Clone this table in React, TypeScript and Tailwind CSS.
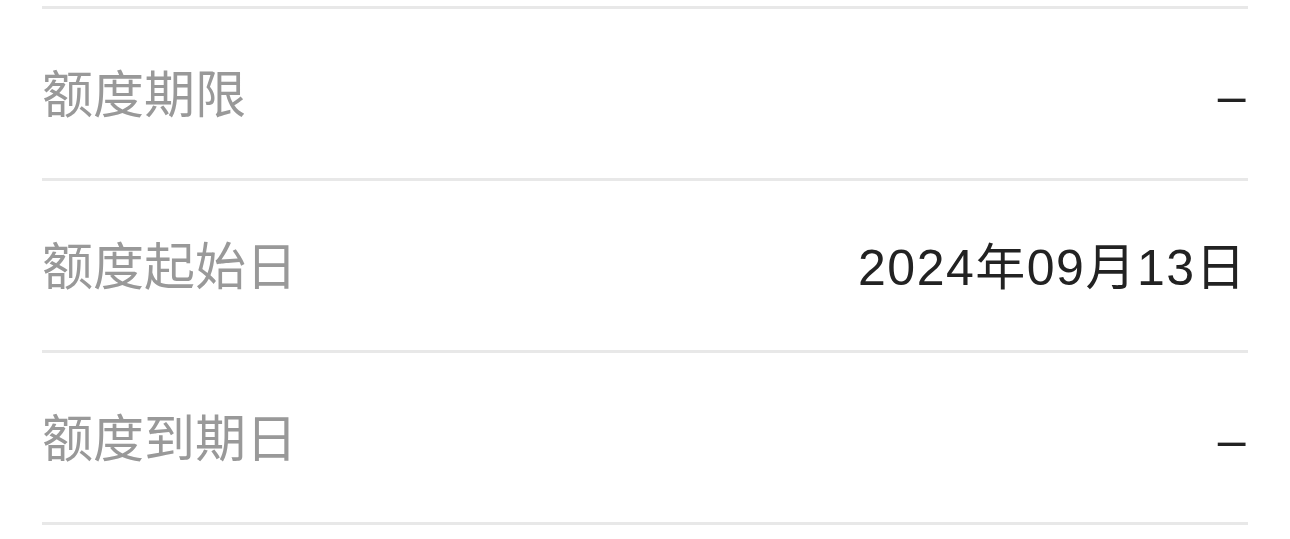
import React from 'react';

const rows = [
  { label: '额度期限', value: '–' },
  { label: '额度起始日', value: '2024年09月13日' },
  { label: '额度到期日', value: '–' },
];

export default function App() {
  return (
    <div
      className="min-h-screen bg-white pt-[6px] px-[42px]"
      style={{ fontFamily: '"Liberation Sans", "Noto Sans CJK SC", sans-serif' }}
    >
      <div className="border-t-[3px] border-[#e8e8e8] w-[1206px]">
        {rows.map((r) => (
          <div
            key={r.label}
            className="flex items-center justify-between h-[172px] border-b-[3px] border-[#e8e8e8] pt-[4px]"
          >
            <span className="text-[51px] text-[#999999] leading-none">{r.label}</span>
            <span className="text-[50px] text-[#222222] leading-none tracking-[1.5px] pr-[1px]">{r.value}</span>
          </div>
        ))}
      </div>
    </div>
  );
}
